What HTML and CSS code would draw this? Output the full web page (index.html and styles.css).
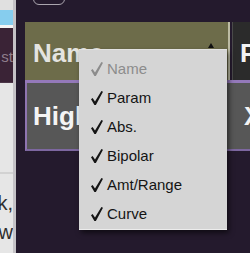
FILE: index.html
```html
<!DOCTYPE html>
<html lang="en">
<head>
    <meta charset="UTF-8">
    <meta name="viewport" content="width=device-width, initial-scale=1.0">
    <title>Modulation Columns</title>
    <link rel="stylesheet" href="styles.css">
</head>
<body>
    <div class="app">
        <aside class="sidebar">
            <div class="sb-top"></div>
            <div class="sb-tab"></div>
            <div class="sb-gap"></div>
            <div class="sb-list"><span>st</span></div>
            <div class="sb-panel">
                <div class="sb-line"><span>k,</span></div>
                <div class="sb-line"><span>w</span></div>
            </div>
        </aside>

        <main class="editor">
            <div class="toolbar">
                <span class="tool-btn"></span>
            </div>

            <div class="table">
                <div class="head">
                    <div class="th th-name">
                        <span>Name</span>
                        <span class="sort-arrow"></span>
                    </div>
                    <div class="th th-next">P</div>
                </div>
                <div class="row">
                    <div class="td td-name">High</div>
                    <div class="td td-next">X</div>
                </div>
            </div>

            <!-- column chooser popup -->
            <ul class="menu">
                <li class="menu-item disabled">
                    <svg class="check" viewBox="0 0 12 14"><path d="M0 8.2 L1.6 7 L4 10.4 L10.4 0 L12 0.7 L4.9 14 L3.4 14 Z"/></svg>
                    Name
                </li>
                <li class="menu-item">
                    <svg class="check" viewBox="0 0 12 14"><path d="M0 8.2 L1.6 7 L4 10.4 L10.4 0 L12 0.7 L4.9 14 L3.4 14 Z"/></svg>
                    Param
                </li>
                <li class="menu-item">
                    <svg class="check" viewBox="0 0 12 14"><path d="M0 8.2 L1.6 7 L4 10.4 L10.4 0 L12 0.7 L4.9 14 L3.4 14 Z"/></svg>
                    Abs.
                </li>
                <li class="menu-item">
                    <svg class="check" viewBox="0 0 12 14"><path d="M0 8.2 L1.6 7 L4 10.4 L10.4 0 L12 0.7 L4.9 14 L3.4 14 Z"/></svg>
                    Bipolar
                </li>
                <li class="menu-item">
                    <svg class="check" viewBox="0 0 12 14"><path d="M0 8.2 L1.6 7 L4 10.4 L10.4 0 L12 0.7 L4.9 14 L3.4 14 Z"/></svg>
                    Amt/Range
                </li>
                <li class="menu-item">
                    <svg class="check" viewBox="0 0 12 14"><path d="M0 8.2 L1.6 7 L4 10.4 L10.4 0 L12 0.7 L4.9 14 L3.4 14 Z"/></svg>
                    Curve
                </li>
            </ul>
        </main>
    </div>
</body>
</html>
```

FILE: styles.css
```css
html, body {
    margin: 0;
    padding: 0;
}

body {
    font-family: "Liberation Sans", Arial, sans-serif;
    width: 250px;
    height: 253px;
    overflow: hidden;
}

.app {
    display: flex;
    height: 253px;
}

/* left strip */
.sidebar {
    width: 13px;
    flex-shrink: 0;
    background: #e6e6e6;
    border-right: 3px solid #c4c2c6;
    display: flex;
    flex-direction: column;
    overflow: hidden;
}

.sb-top {
    height: 10px;
    background: #e0e0e0;
}

.sb-tab {
    height: 15px;
    background: #86cdee;
}

.sb-gap {
    height: 3px;
    background: #f4f4f4;
}

.sb-list {
    height: 55px;
    flex-shrink: 0;
    background: #3a2336;
    color: #8e7e8c;
    font-size: 15px;
    display: flex;
    justify-content: flex-end;
    align-items: center;
    white-space: nowrap;
    padding-top: 2px;
    box-sizing: border-box;
    box-shadow: inset 0 -10px 0 -9px #4c3648;
}

.sb-panel {
    flex: 1;
    padding-top: 106px;
    background: linear-gradient(#e6e6e6 89px, #d2d2d2 89px, #d2d2d2 91px, #e6e6e6 91px);
}

.sb-line {
    display: flex;
    justify-content: flex-end;
    white-space: nowrap;
    font-size: 20px;
    line-height: 29px;
    color: #2e2e2e;
}

/* main editor */
.editor {
    flex: 1;
    position: relative;
    background: #241a2d;
    padding-left: 9px;
    overflow: hidden;
}

.toolbar {
    display: flex;
    align-items: flex-end;
    height: 22px;
    padding-left: 8px;
    padding-bottom: 17px;
    box-sizing: border-box;
}

.tool-btn {
    width: 30px;
    height: 14px;
    flex-shrink: 0;
    border: 1.5px solid #aaa5ae;
    border-radius: 6px;
}

.table {
    width: 260px;
}

.head {
    display: flex;
    height: 58px;
    border-bottom: 3px solid #9479ba;
}

.th {
    font-size: 26px;
    font-weight: bold;
    display: flex;
    align-items: center;
    padding-top: 5px;
    box-sizing: border-box;
}

.th-name {
    width: 205px;
    background: #6d6c4a;
    color: #e4e4e0;
    padding-left: 8px;
    padding-right: 14px;
    justify-content: space-between;
    border-right: 2px solid #bdbca4;
}

.sort-arrow {
    align-self: flex-start;
    margin-top: 16px;
    width: 0;
    height: 0;
    border-left: 3.5px solid transparent;
    border-right: 3.5px solid transparent;
    border-bottom: 5px solid #111;
}

.th-next {
    flex: 1;
    margin-left: 2px;
    background: #2b2b2b;
    color: #f2f2f2;
    padding-left: 8px;
    box-shadow: inset 1px 0 0 #4a4a4a;
}

.row {
    display: flex;
    height: 68px;
    background: #575757;
    border-left: 2px solid #8e74b0;
    border-bottom: 2px solid #7d67a0;
    box-sizing: border-box;
}

.td {
    font-size: 26px;
    font-weight: bold;
    color: #f4f4f4;
    display: flex;
    align-items: center;
}

.td-name {
    width: 217px;
    padding-left: 6px;
    box-sizing: border-box;
}

.td-next {
    flex: 1;
}

/* column chooser popup */
.menu {
    position: absolute;
    left: 63px;
    top: 49px;
    width: 148px;
    height: 181px;
    margin: 0;
    padding: 4px 0 2px;
    list-style: none;
    background: #d5d5d5;
    border-top: 1px solid #e2e2e2;
    border-bottom: 1px solid #ececec;
    box-sizing: border-box;
    box-shadow: 2px 3px 5px rgba(0, 0, 0, 0.55);
}

.menu-item {
    display: flex;
    align-items: center;
    height: 29px;
    padding-left: 12px;
    font-size: 15px;
    color: #141414;
}

.menu-item.disabled {
    color: #8c8c8c;
}

.check {
    width: 12px;
    height: 14px;
    margin-right: 4px;
    fill: currentColor;
}
```
